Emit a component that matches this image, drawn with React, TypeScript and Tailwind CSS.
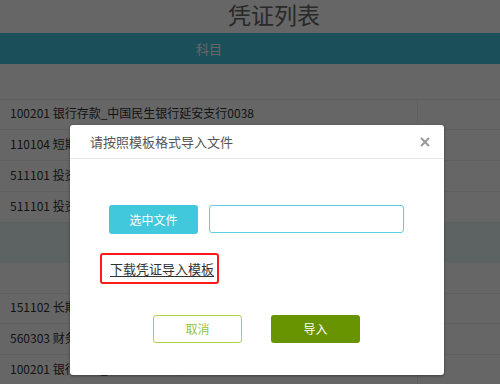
import React from "react";

const topRows = [
    "100201 银行存款_中国民生银行延安支行0038",
    "110104 短期借款",
    "511101 投资收益",
    "511101 投资收益",
];

const bottomRows = [
    "151102 长期股权投资",
    "560303 财务费用",
    "100201 银行存款_中国民生银行延安支行0038",
];

function Row({text, first}: {text: string; first?: boolean}) {
    return (
        <div className={`flex h-[31px] border-b border-[#eeeeee] ${first ? "border-t" : ""}`}>
            <div className="w-[418px] border-r border-[#eeeeee] pl-[10px] pb-[3px] flex items-center text-[12px] text-[#333]">
                {text}
            </div>
            <div className="flex-1"></div>
        </div>
    );
}

export default function App() {
    return (
        <div
            className="relative w-[500px] h-[384px] overflow-hidden bg-white"
            style={{fontFamily: '"Noto Sans CJK SC", "Noto Sans", sans-serif'}}
        >
            {/* page behind the dialog */}
            <div className="h-[33px] pl-[48px] pt-[1px] text-center text-[23px] leading-[26px] text-[#666]">
                凭证列表
            </div>
            <div className="flex h-[31px] bg-[#44c6de]">
                <div className="w-[418px] flex items-center justify-center text-[13px] text-white">科目</div>
            </div>
            <div className="h-[35px]"></div>
            {topRows.map((t, i) => (
                <Row key={i} text={t} first={i === 0} />
            ))}
            <div className="h-[40px] bg-[#e8f5f5]"></div>
            <div className="h-[30px]"></div>
            {bottomRows.map((t, i) => (
                <Row key={i} text={t} first={i === 0} />
            ))}

            {/* overlay */}
            <div className="absolute inset-0 bg-black/60"></div>

            {/* dialog */}
            <div className="absolute left-[70px] top-[125px] w-[374px] h-[250px] bg-white rounded-[3px] shadow-[0_1px_3px_rgba(0,0,0,0.4)] flex flex-col">
                <div className="h-[34px] border-b border-[#e5e5e5] pl-[20px] pr-[14px] flex items-center justify-between">
                    <span className="text-[13px] text-[#555]">请按照模板格式导入文件</span>
                    <svg width="10" height="10" viewBox="0 0 10 10">
                        <path d="M1 1L9 9M9 1L1 9" stroke="#999" strokeWidth="2" />
                    </svg>
                </div>
                <div className="pt-[46px] pl-[39px] flex gap-[11px]">
                    <button className="w-[89px] h-[29px] rounded-[3px] bg-[#41c8dc] text-white text-[12px]">
                        选中文件
                    </button>
                    <div className="w-[195px] h-[28px] rounded-[3px] border border-[#5bd0e0]"></div>
                </div>
                <div className="mt-[19px] ml-[30px] w-[119px] h-[31px] border-2 border-[#ff1a1a] rounded-[3px] pl-[8px] flex items-center">
                    <span className="text-[13px] text-[#333] underline underline-offset-[2px]">下载凭证导入模板</span>
                </div>
                <div className="mt-[31px] pl-[83px] flex gap-[29px]">
                    <button className="w-[89px] h-[28px] rounded-[3px] border border-[#a8d53c] text-[#8cc63f] text-[12px]">
                        取消
                    </button>
                    <button className="w-[89px] h-[28px] rounded-[3px] bg-[#679400] text-white text-[12px]">
                        导入
                    </button>
                </div>
            </div>
        </div>
    );
}
